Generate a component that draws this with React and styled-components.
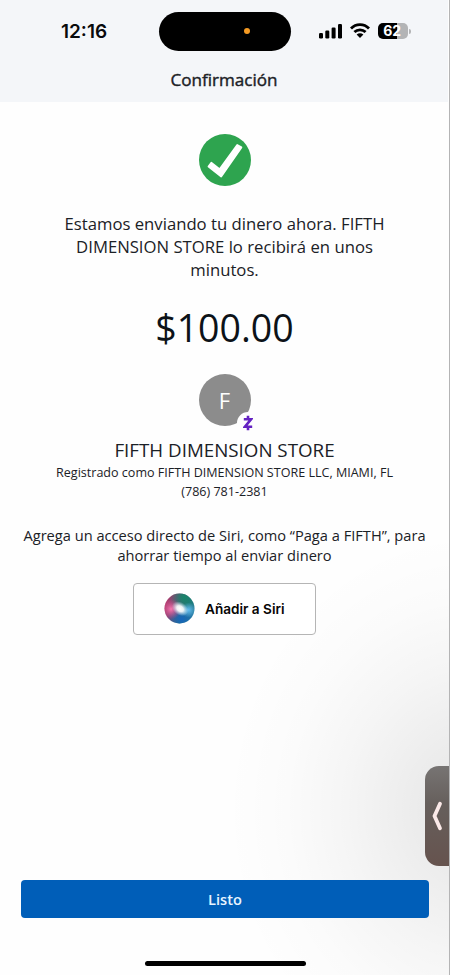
import React from 'react';
import styled, { createGlobalStyle } from 'styled-components';

const GlobalStyle = createGlobalStyle`
  * { box-sizing: border-box; }
  body { margin: 0; background: #fff; }
  button { font: inherit; padding: 0; cursor: pointer; }
  svg { display: block; }
`;

const Screen = styled.main`
  position: relative;
  display: flex;
  flex-direction: column;
  width: 450px;
  height: 975px;
  overflow: hidden;
  border-right: 1px solid #b4b4b5;
  color: #1b2126;
  font-family: "Open Sans", sans-serif;
  background:
    radial-gradient(ellipse 250px 280px at 475px 810px, rgba(0, 0, 0, 0.1), rgba(0, 0, 0, 0.07) 25%, rgba(0, 0, 0, 0.035) 52%, rgba(0, 0, 0, 0.012) 76%, transparent 100%),
    #fefefe;
`;

const Header = styled.header`
  height: 102px;
  margin-right: 1px;
  background: #f4f6f9;
`;

const StatusBar = styled.div`
  display: grid;
  grid-template-columns: 159px 132px 1fr;
  align-items: center;
  height: 62px;
`;

const Clock = styled.time`
  padding: 1px 0 0 61px;
  color: #080a0c;
  font: 600 19px/24px Inter, sans-serif;
`;

const Island = styled.div`
  display: flex;
  align-items: center;
  justify-content: flex-end;
  height: 39px;
  padding-right: 41px;
  border-radius: 20px;
  background: #000;
`;

const RecordingDot = styled.span`
  width: 6px;
  height: 6px;
  border-radius: 50%;
  background: #f59a23;
`;

const Indicators = styled.div`
  display: flex;
  align-items: center;
  gap: 8px;
  padding-left: 28px;
`;

const Battery = styled.div`
  display: flex;
  align-items: center;
  gap: 1px;
`;

const BatteryBody = styled.span`
  width: 30px;
  height: 16px;
  padding-right: 2px;
  border-radius: 5px;
  background: linear-gradient(90deg, #000 ${props => props.$level}%, #b3b4b6 ${props => props.$level}%);
  color: #fff;
  font: 700 14px/16px Inter, sans-serif;
  letter-spacing: -0.3px;
  text-align: center;
`;

const BatteryTip = styled.span`
  width: 2px;
  height: 5px;
  border-radius: 0 2px 2px 0;
  background: #b3b4b6;
`;

const Title = styled.h1`
  margin: 6px 0 0;
  color: #1b2126;
  font-size: 17.1px;
  font-weight: 400;
  line-height: 23px;
  text-align: center;
  -webkit-text-stroke: 0.4px #1b2126;
`;

const Content = styled.section`
  display: flex;
  flex: 1;
  flex-direction: column;
  align-items: center;
  padding-top: 32px;
  text-align: center;
`;

const Message = styled.p`
  width: 350px;
  margin: 27px 0 0;
  font-size: 16.7px;
  line-height: 22.8px;
`;

const Amount = styled.div`
  margin-top: 20.8px;
  color: #0c1218;
  font-size: 37.5px;
  line-height: 52px;
`;

const Avatar = styled.div`
  position: relative;
  width: 52px;
  height: 52px;
  margin-top: 20px;
  border-radius: 50%;
  background: #8c8c8c;
  color: #fff;
  font-size: 22px;
  line-height: 52px;
`;

const ZelleBadge = styled.span`
  position: absolute;
  top: 38px;
  left: 38px;
  display: grid;
  place-items: center;
  width: 22px;
  height: 22px;
  border-radius: 50%;
  background: #fefefe;
`;

const Recipient = styled.h2`
  margin: 11px 0 0;
  font-size: 18.75px;
  font-weight: 400;
  line-height: 26px;
`;

const Detail = styled.div`
  font-size: 12.55px;
  line-height: 19px;
`;

const SiriHint = styled.p`
  width: 420px;
  margin: 24.2px 0 0;
  font-size: 14.63px;
  line-height: 20px;
`;

const SiriButton = styled.button`
  display: flex;
  align-items: center;
  gap: 10px;
  width: 183px;
  height: 52px;
  margin-top: 17.4px;
  padding-left: 30px;
  border: 1px solid #b5b5b5;
  border-radius: 4px;
  background: #fff;
  color: #050505;
  font: 600 13.6px/20px Inter, sans-serif;
`;

const Footer = styled.footer`
  display: flex;
  flex-direction: column;
  align-items: center;
  height: 95px;
  padding: 0 20px 0 21px;
`;

const DoneButton = styled.button`
  width: 100%;
  height: 38px;
  border: 0;
  border-radius: 4px;
  background: #005eb8;
  color: #e8f5ff;
  font-size: 14.6px;
  font-weight: 600;
`;

const HomeIndicator = styled.div`
  width: 161px;
  height: 5px;
  margin-top: 43px;
  border-radius: 3px;
  background: #000;
`;

const SideHandle = styled.button`
  position: absolute;
  top: 766px;
  right: -1px;
  width: 25px;
  height: 100px;
  padding-left: 6px;
  border: 0;
  border-radius: 14px 0 0 14px;
  background: linear-gradient(#777473, #665f5c 38%, #66534e);
`;

const SignalIcon = () => (
  <svg width="23" height="16" viewBox="0 0 23 16">
    <rect x="0" y="10" width="4" height="5.5" rx="1.2" />
    <rect x="6.3" y="7.5" width="4" height="8" rx="1.2" />
    <rect x="12.6" y="4.5" width="4" height="11" rx="1.2" />
    <rect x="19" y="1" width="4" height="14.5" rx="1.2" />
  </svg>
);

const WifiIcon = () => (
  <svg width="20" height="16" viewBox="0 0 20 16">
    <g fill="none" stroke="#000" strokeWidth="2.8">
      <path d="M1 5.5C6 .4 14 .4 19 5.5" />
      <path d="M4.4 9.1c3.1-3.1 8.1-3.1 11.2 0" />
    </g>
    <path d="M6.6 11.5c2-1.8 4.8-1.8 6.8 0L10 15z" />
  </svg>
);

const CheckIcon = () => (
  <svg width="52" height="52" viewBox="0 0 52 52">
    <circle cx="26" cy="26" r="26" fill="#2ea44f" />
    <path d="M9.5 32.5l2.8-3.7 8.3 6.5L38.2 11l4.2 2.4-20.2 29.2z" fill="#fff" stroke="#fff" strokeWidth="1.8" strokeLinejoin="round" />
  </svg>
);

const ZelleIcon = () => (
  <svg width="10" height="16" viewBox="0 0 10 16">
    <path d="M.8 4.2h7.4L1.8 11.8h7.4M5 .8v3.4M5 11.8v3.4" fill="none" stroke="#6422c2" strokeWidth="2.6" />
  </svg>
);

const SiriIcon = () => (
  <svg width="31" height="31" viewBox="0 0 31 31">
    <defs>
      <linearGradient id="orb" x1="0" y1=".2" x2="1" y2=".6">
        <stop offset="0" stopColor="#b93568" />
        <stop offset=".35" stopColor="#764a78" />
        <stop offset=".7" stopColor="#25727c" />
        <stop offset="1" stopColor="#287d9d" />
      </linearGradient>
      <radialGradient id="green" cx=".65" cy=".13" r=".5">
        <stop offset="0" stopColor="#168669" />
        <stop offset="1" stopColor="#168669" stopOpacity="0" />
      </radialGradient>
      <radialGradient id="pink" cx=".22" cy=".52" r=".34">
        <stop offset="0" stopColor="#f779b1" />
        <stop offset="1" stopColor="#e34686" stopOpacity="0" />
      </radialGradient>
      <radialGradient id="blue" cx=".57" cy=".86" r=".48">
        <stop offset="0" stopColor="#1666bd" />
        <stop offset="1" stopColor="#1666bd" stopOpacity="0" />
      </radialGradient>
      <radialGradient id="cyan" cx=".8" cy=".55" r=".25">
        <stop offset="0" stopColor="#63bdf0" />
        <stop offset="1" stopColor="#63bdf0" stopOpacity="0" />
      </radialGradient>
      <radialGradient id="glow">
        <stop offset="0" stopColor="#fff" />
        <stop offset=".4" stopColor="#fff" stopOpacity=".9" />
        <stop offset="1" stopColor="#cceeff" stopOpacity="0" />
      </radialGradient>
    </defs>
    <circle cx="15.5" cy="15.5" r="15" fill="url(#orb)" />
    <circle cx="15.5" cy="15.5" r="15" fill="url(#green)" />
    <circle cx="15.5" cy="15.5" r="15" fill="url(#blue)" />
    <circle cx="15.5" cy="15.5" r="15" fill="url(#pink)" />
    <circle cx="15.5" cy="15.5" r="15" fill="url(#cyan)" />
    <ellipse cx="16.5" cy="15.5" rx="9" ry="6.5" fill="url(#glow)" transform="rotate(35 16 15)" />
  </svg>
);

const ChevronIcon = () => (
  <svg width="12" height="30" viewBox="0 0 12 30">
    <path d="M9 2.8L3.5 15 9 27.2" fill="none" stroke="#fbe9e8" strokeWidth="3.8" strokeLinecap="round" strokeLinejoin="round" />
  </svg>
);

const App = () => (
  <>
    <GlobalStyle />
    <Screen>
      <Header>
        <StatusBar>
          <Clock>12:16</Clock>
          <Island><RecordingDot /></Island>
          <Indicators>
            <SignalIcon />
            <WifiIcon />
            <Battery>
              <BatteryBody $level={64}>62</BatteryBody>
              <BatteryTip />
            </Battery>
          </Indicators>
        </StatusBar>
        <Title>Confirmación</Title>
      </Header>
      <Content>
        <CheckIcon />
        <Message>
          Estamos enviando tu dinero ahora. FIFTH<br />
          DIMENSION STORE lo recibirá en unos<br />
          minutos.
        </Message>
        <Amount>$100.00</Amount>
        <Avatar>
          F
          <ZelleBadge><ZelleIcon /></ZelleBadge>
        </Avatar>
        <Recipient>FIFTH DIMENSION STORE</Recipient>
        <Detail>Registrado como FIFTH DIMENSION STORE LLC, MIAMI, FL</Detail>
        <Detail>(786) 781-2381</Detail>
        <SiriHint>
          Agrega un acceso directo de Siri, como “Paga a FIFTH”, para<br />
          ahorrar tiempo al enviar dinero
        </SiriHint>
        <SiriButton>
          <SiriIcon />
          Añadir a Siri
        </SiriButton>
      </Content>
      <Footer>
        <DoneButton>Listo</DoneButton>
        <HomeIndicator />
      </Footer>
      <SideHandle aria-label="Abrir panel">
        <ChevronIcon />
      </SideHandle>
    </Screen>
  </>
);

export default App;
